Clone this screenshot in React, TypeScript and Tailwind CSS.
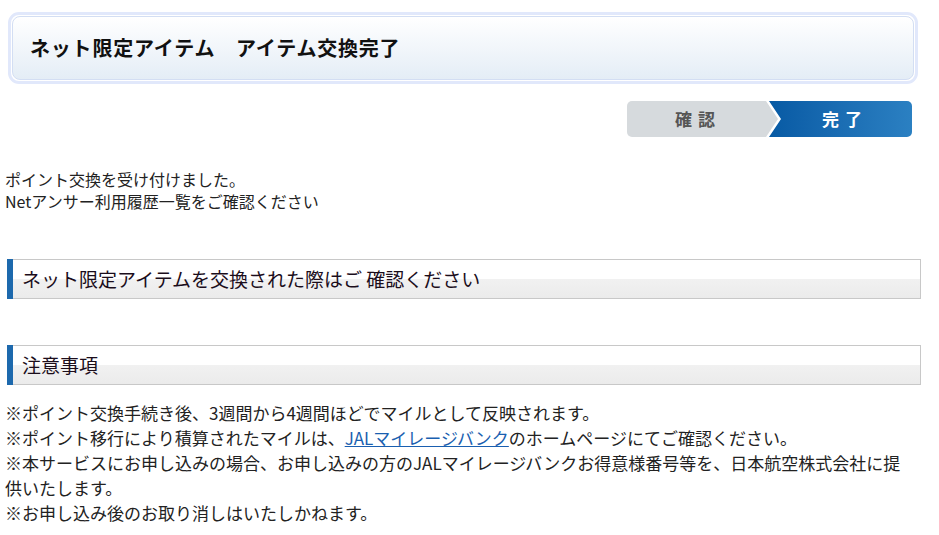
export default function App() {
  const notes = [
    "※ポイント交換手続き後、3週間から4週間ほどでマイルとして反映されます。",
  ]

  return (
    <div className="w-[939px] h-[535px] bg-white text-[#222] font-['Noto_Sans_CJK_JP','Noto_Sans',sans-serif] overflow-hidden">
      {/* TITLE */}
      <div className="pt-[12px] pl-[8px] w-[918px]">
        <div className="rounded-[11px] border-[3px] border-[#e1e8fb] bg-white p-px">
          <div className="h-[64px] rounded-[8px] border border-[#d3def3] bg-gradient-to-b from-white to-[#e4edf6] flex items-center pl-[17px]">
            <h1 className="text-[20px] font-bold text-[#111] tracking-[0.8px]">
              ネット限定アイテム　アイテム交換完了
            </h1>
          </div>
        </div>
      </div>

      {/* STEPS */}
      <div className="flex justify-end w-[912px] mt-[17px]">
        <div className="w-[151px] h-[36px] bg-[#d6dadd] rounded-l-[5px] [clip-path:polygon(0_0,139px_0,100%_50%,139px_100%,0_100%)] flex items-center pl-[48px] text-[17px] font-bold text-[#555] tracking-[6px]">
          確認
        </div>
        <div className="ml-[-9px] w-[143px] h-[36px] rounded-r-[5px] bg-gradient-to-r from-[#075aa4] to-[#2b80c2] [clip-path:polygon(0_0,100%_0,100%_100%,0_100%,12px_50%)] flex items-center pl-[53px] text-[17px] font-bold text-white tracking-[6px]">
          完了
        </div>
      </div>

      {/* MESSAGE */}
      <div className="pl-[5px] mt-[31px] text-[16px] leading-[22px]">
        <p>ポイント交換を受け付けました。</p>
        <p>Netアンサー利用履歴一覧をご確認ください</p>
      </div>

      {/* SECTION 1 */}
      <SectionHeader className="mt-[47px]">
        ネット限定アイテムを交換された際はご 確認ください
      </SectionHeader>

      {/* SECTION 2 */}
      <SectionHeader className="mt-[46px]">注意事項</SectionHeader>

      {/* NOTES */}
      <div className="pl-[5px] w-[910px] mt-[15px] text-[17px] leading-[25px]">
        {notes.map((n, i) => (
          <p key={i}>{n}</p>
        ))}
        <p>
          ※ポイント移行により積算されたマイルは、
          <a href="#" className="text-[#1a5fb0] underline">
            JALマイレージバンク
          </a>
          のホームページにてご確認ください。
        </p>
        <p>
          ※本サービスにお申し込みの場合、お申し込みの方のJALマイレージバンクお得意様番号等を、日本航空株式会社に提供いたします。
        </p>
        <p>※お申し込み後のお取り消しはいたしかねます。</p>
      </div>
    </div>
  )
}

function SectionHeader({
  children,
  className,
}: {
  children: React.ReactNode
  className?: string
}) {
  return (
    <div
      className={`ml-[7px] w-[914px] h-[40px] flex border border-[#c8c8c8] border-l-0 bg-[linear-gradient(to_bottom,#ffffff_0%,#ffffff_50%,#f1f1f1_50%,#ebebeb_100%)] ${className ?? ""}`}
    >
      <div className="w-[6px] bg-[#1d69ad] -my-px" />
      <h2 className="pl-[9px] flex items-center text-[19px] text-[#1b0d1b] font-normal">
        {children}
      </h2>
    </div>
  )
}
